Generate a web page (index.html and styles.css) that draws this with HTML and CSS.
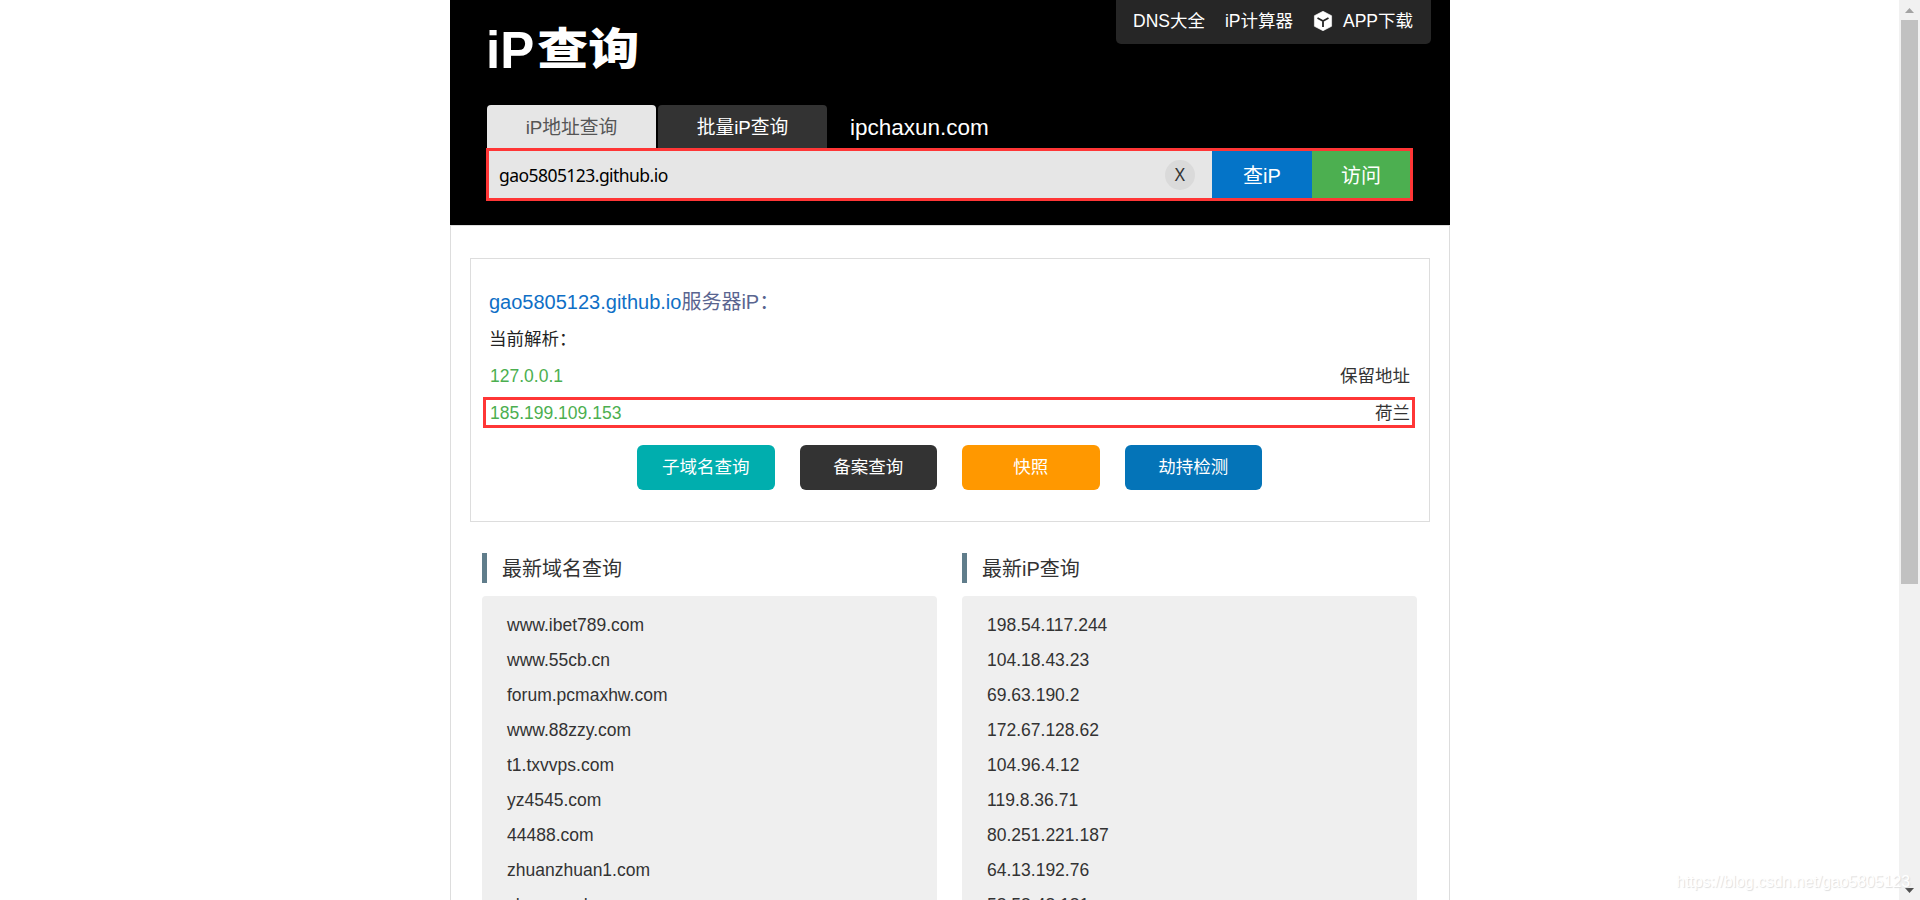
FILE: index.html
```html
<!DOCTYPE html>
<html lang="zh-CN">
<head>
  <meta charset="UTF-8" />
  <meta name="viewport" content="width=device-width, initial-scale=1.0"/>
  <title>iP查询</title>
  <link rel="stylesheet" href="styles.css">
</head>
<body>

<div class="page">
  <div class="wrapper">
    <div class="header">
      <div class="header-top">
        <h1 class="logo">iP<span>查询</span></h1>
        <div class="nav">
          <a>DNS大全</a>
          <a>iP计算器</a>
          <a class="app">
            <svg width="20" height="20" viewBox="0 0 20 20">
              <path d="M10 0.3 L18.6 4.7 V15.3 L10 19.7 L1.4 15.3 V4.7 Z" fill="#fff" stroke="#fff" stroke-width="0.6" stroke-linejoin="round"/>
              <path d="M4.5 7 L10 10 L15.5 7 M10 10 V16" fill="none" stroke="#262626" stroke-width="1.8"/>
            </svg>
            APP下载
          </a>
        </div>
      </div>

      <div class="tabs">
        <a class="tab active">iP地址查询</a>
        <a class="tab">批量iP查询</a>
        <span class="domain">ipchaxun.com</span>
      </div>

      <div class="search">
        <div class="search-input">gao5805123.github.io</div>
        <div class="clear">X</div>
        <div class="btn-query">查iP</div>
        <div class="btn-visit">访问</div>
      </div>
    </div>

    <div class="main">
      <div class="info">
        <p class="info-title"><span>gao5805123.github.io</span>服务器iP：</p>
        <p class="info-label">当前解析：</p>
        <div class="row"><a>127.0.0.1</a><span>保留地址</span></div>
        <div class="row marked"><a>185.199.109.153</a><span>荷兰</span></div>
        <div class="buttons">
          <a class="teal">子域名查询</a>
          <a class="dark">备案查询</a>
          <a class="orange">快照</a>
          <a class="blue">劫持检测</a>
        </div>
      </div>

      <div class="lists">
        <div class="col">
          <h2>最新域名查询</h2>
          <ul>
            <li>www.ibet789.com</li>
            <li>www.55cb.cn</li>
            <li>forum.pcmaxhw.com</li>
            <li>www.88zzy.com</li>
            <li>t1.txvvps.com</li>
            <li>yz4545.com</li>
            <li>44488.com</li>
            <li>zhuanzhuan1.com</li>
            <li>shoprops.hu.com</li>
          </ul>
        </div>
        <div class="col">
          <h2>最新iP查询</h2>
          <ul>
            <li>198.54.117.244</li>
            <li>104.18.43.23</li>
            <li>69.63.190.2</li>
            <li>172.67.128.62</li>
            <li>104.96.4.12</li>
            <li>119.8.36.71</li>
            <li>80.251.221.187</li>
            <li>64.13.192.76</li>
            <li>58.58.48.181</li>
          </ul>
        </div>
      </div>
    </div>
  </div>
</div>

<div class="scrollbar">
  <svg width="21" height="20" viewBox="0 0 21 20"><path d="M6 13 L10.5 8 L15 13 Z" fill="#a3a3a3"/></svg>
  <div class="thumb"></div>
  <svg class="down" width="21" height="20" viewBox="0 0 21 20"><path d="M6 8 L10.5 13 L15 8 Z" fill="#505050"/></svg>
</div>

<div class="watermark">https://blog.csdn.net/gao5805123</div>

</body>
</html>
```
FILE: styles.css
```css
* {
  box-sizing: border-box;
}

body {
  display: flex;
  height: 900px;
  margin: 0;
  overflow: hidden;
  background: #fff;
  color: #333;
  font-family: "Liberation Sans", Arial, "Noto Sans CJK SC", sans-serif;
  font-size: 17.5px;
}

h1, h2, p, ul {
  margin: 0;
  padding: 0;
  font-weight: normal;
}

.page {
  flex: 1;
  height: 900px;
  padding-left: 450px;
  overflow: hidden;
}

.wrapper {
  width: 1000px;
}

.header {
  height: 225px;
  background: #000;
  color: #fff;
}

.header-top {
  display: flex;
  justify-content: space-between;
  height: 105px;
  padding: 0 19px 0 36px;
}

.logo {
  display: flex;
  align-items: center;
  height: 101px;
  font-size: 51px;
  font-weight: bold;
}

.logo span {
  margin: 0 0 9px 3px;
  font-family: "Noto Sans CJK SC", sans-serif;
  font-size: 51px;
  font-weight: 900;
  transform: scaleY(0.87);
}

.nav {
  display: flex;
  align-items: flex-start;
  gap: 20px;
  width: 315px;
  height: 44px;
  padding-left: 17px;
  border-radius: 0 0 5px 5px;
  background: #262626;
  line-height: 42px;
  white-space: nowrap;
}

.app {
  display: flex;
  align-items: center;
  gap: 10px;
}

.tabs {
  display: flex;
  gap: 2px;
  height: 43px;
  padding-left: 37px;
  font-size: 18.75px;
  line-height: 46px;
}

.tab {
  width: 169px;
  border-radius: 4px 4px 0 0;
  background: #333;
  text-align: center;
}

.tab.active {
  background: #e6e6e6;
  color: #555;
}

.domain {
  padding-left: 21px;
  font-size: 22.5px;
}

.search {
  display: flex;
  align-items: center;
  width: 927px;
  height: 53px;
  margin-left: 36px;
  border: 3px solid #ff3636;
  background: #e6e6e6;
  line-height: 51px;
}

.search-input {
  flex: 1;
  padding: 1px 0 0 10px;
  color: #000;
  font-family: "Noto Sans", sans-serif;
  letter-spacing: -0.55px;
}

.clear {
  width: 30px;
  height: 30px;
  margin-right: 17px;
  border-radius: 50%;
  background: #dadada;
  color: #333;
  font-family: "Noto Sans", sans-serif;
  line-height: 29px;
  text-align: center;
}

.btn-query,
.btn-visit {
  width: 100px;
  height: 47px;
  background: #0474c8;
  font-size: 20px;
  text-align: center;
}

.btn-visit {
  width: 98px;
  background: #4caf50;
}

.main {
  height: 1000px;
  padding: 32px 19px 0;
  border: 1px solid #ddd;
}

.info {
  height: 264px;
  padding: 25px 19px 0 18px;
  border: 1px solid #ddd;
}

.info-title {
  height: 37px;
  color: #5a6590;
  font-size: 20px;
  line-height: 37px;
}

.info-title span {
  color: #0f6fc6;
}

.info-label {
  color: #222;
  line-height: 37px;
}

.row {
  display: flex;
  justify-content: space-between;
  line-height: 37px;
}

.row a {
  padding-left: 1px;
  color: #4caf50;
}

.marked {
  height: 31px;
  margin: 2px -5px 0 -6px;
  padding: 0 2px 0 3px;
  border: 3px solid #ff3636;
  line-height: 26px;
}

.buttons {
  display: flex;
  justify-content: center;
  gap: 25px;
  margin-top: 17px;
}

.buttons a {
  width: 137.5px;
  height: 45px;
  border-radius: 6px;
  color: #fff;
  line-height: 44px;
  text-align: center;
}

.teal { background: #00aeae; }
.dark { background: #333; }
.orange { background: #ff9800; }
.blue { background: #0474b8; }

.lists {
  display: flex;
  gap: 25px;
  padding: 31px 12px 0;
}

.col {
  width: 455px;
}

.col h2 {
  height: 30px;
  padding-left: 15px;
  border-left: 5px solid #607d8b;
  font-size: 20px;
  line-height: 32px;
}

.col ul {
  margin-top: 13px;
  padding: 12px 25px;
  border-radius: 4px;
  background: #efefef;
  list-style: none;
  line-height: 35px;
}

.scrollbar {
  display: flex;
  flex-direction: column;
  width: 21px;
  height: 900px;
  background: #f1f1f1;
}

.thumb {
  width: 17px;
  height: 564px;
  margin-left: 2px;
  background: #c1c1c1;
}

.down {
  margin-top: auto;
}

.watermark {
  position: absolute;
  right: 10px;
  bottom: 9px;
  color: #fff;
  font-size: 15.8px;
  text-shadow: 1px 1px 1px #ddd;
}
```
